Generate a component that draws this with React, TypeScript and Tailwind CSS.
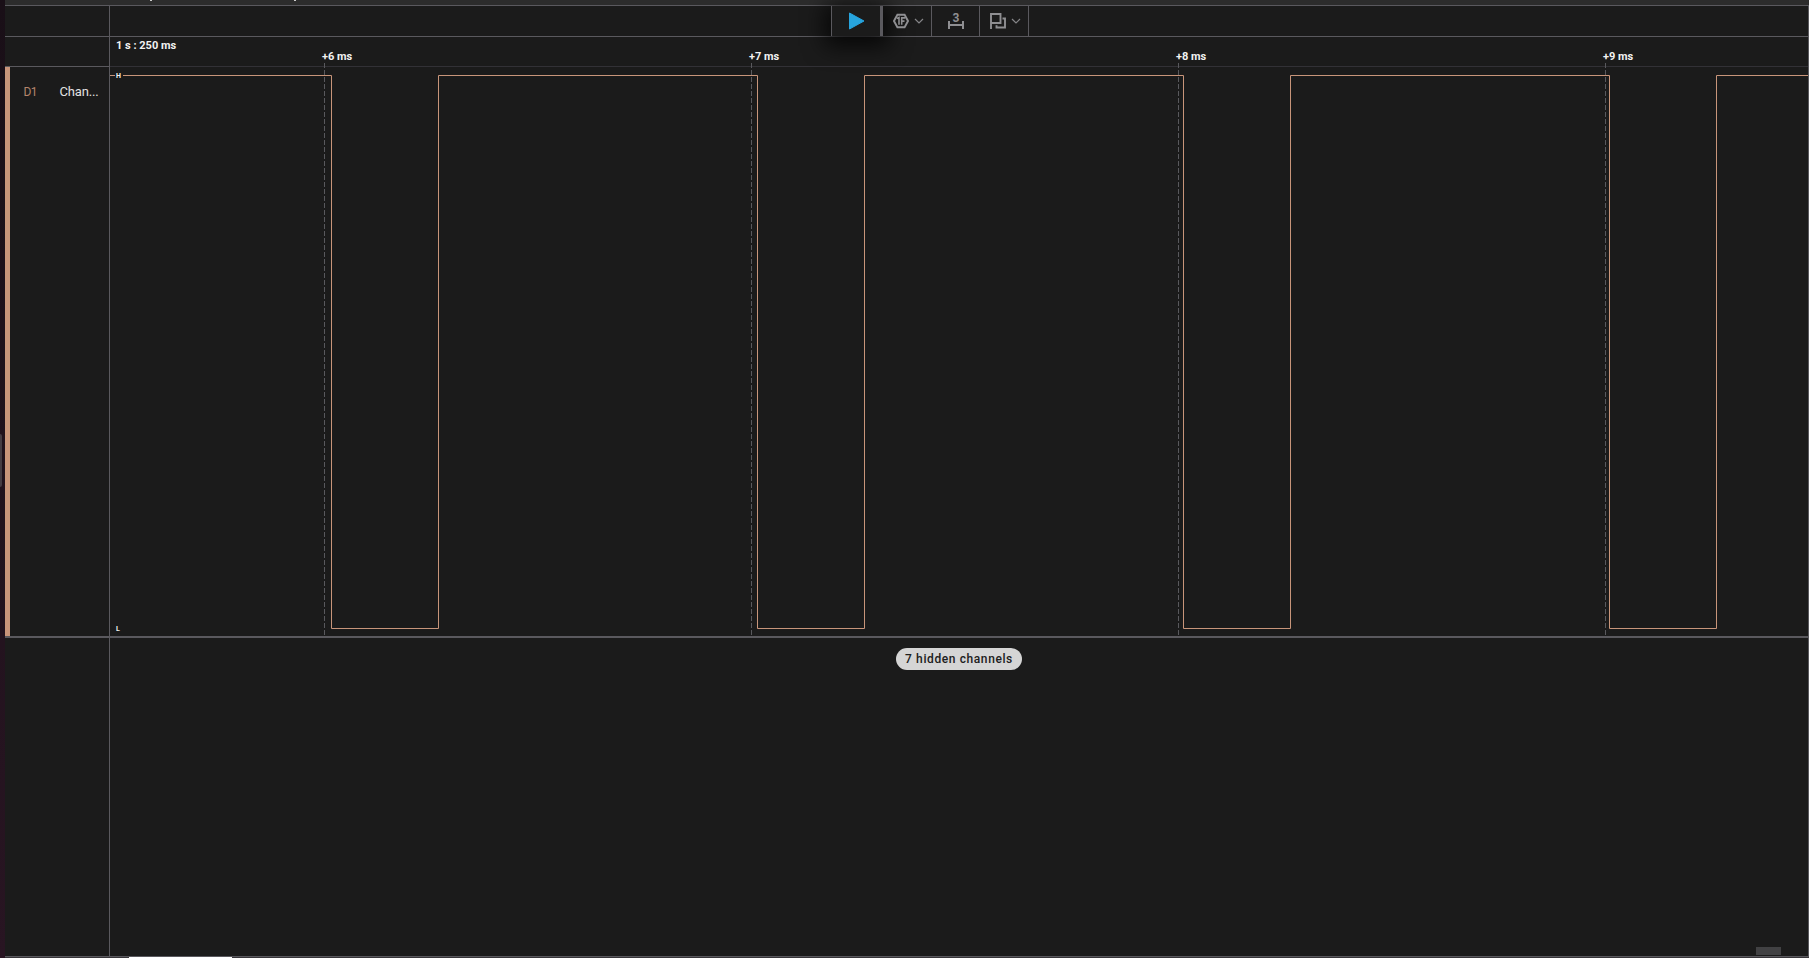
import React from "react";

const MARKS = [
  { x: 324, label: "+6 ms" },
  { x: 751, label: "+7 ms" },
  { x: 1178, label: "+8 ms" },
  { x: 1605, label: "+9 ms" },
];

const PULSES = [
  [221, 328],
  [647, 754],
  [1073, 1180],
  [1499, 1606],
];

function Chevron() {
  return (
    <svg width="10" height="6" viewBox="0 0 10 6" fill="none" stroke="#858588" strokeWidth="1.2">
      <path d="M1 1l4 4 4-4" />
    </svg>
  );
}

function Toolbar() {
  return (
    <div className="flex h-[30px] text-[#8f8f92]">
      <div className="w-[721px] shrink-0" />
      <div className="relative z-10 flex w-[52px] shrink-0 items-center border-l border-r-[3px] border-[#5a595e] bg-[#1b1b1b] pl-[17px] shadow-[0_4px_22px_6px_rgba(0,0,0,0.75)]">
        <svg width="16" height="18" viewBox="0 0 16 18">
          <path d="M0.5 1L15 9L0.5 17Z" fill="#27a4dd" stroke="#27a4dd" strokeLinejoin="round" />
        </svg>
      </div>
      <div className="relative z-20 flex w-[49px] shrink-0 items-center gap-[5px] border-r border-[#5a595e] pl-[10px]">
        <svg width="16" height="16" viewBox="0 0 16 16" fill="none" stroke="currentColor" strokeWidth="1.9">
          <path d="M4.4 1.7h7.2L15 8l-3.4 6.3H4.4L1 8z" />
          <path d="M3.8 5.6L6 4.6v7.2M8.7 11.8V4.9h3.6M8.7 8.1h2.8" strokeWidth="1.6" />
        </svg>
        <Chevron />
      </div>
      <div className="flex w-12 shrink-0 items-center justify-center border-r border-[#5a595e]">
        <svg width="16" height="18" viewBox="0 0 16 18" fill="none" stroke="currentColor" strokeWidth="2">
          <path d="M1 9V17M15 9V17M1 13h14" />
          <text x="8" y="9.5" fill="currentColor" stroke="none" fontFamily="Roboto" fontSize="12" fontWeight="700" textAnchor="middle">3</text>
        </svg>
      </div>
      <div className="flex w-[49px] shrink-0 items-center gap-[5px] border-r border-[#5a595e] pl-[10px]">
        <svg width="16" height="16" viewBox="0 0 16 16" fill="none" stroke="currentColor" strokeWidth="1.9">
          <path d="M1 16V1h9.5v9H1M12.5 5.5H15v9H6.5v-2.3" />
        </svg>
        <Chevron />
      </div>
    </div>
  );
}

function Ruler() {
  return (
    <div className="relative h-[29px] text-[11px] leading-[13px] font-bold text-[#f2f2f2]">
      <span className="absolute top-[2px] left-[6px] whitespace-nowrap">1 s : 250 ms</span>
      {MARKS.map((m) => (
        <span key={m.label} className="absolute top-[13px] whitespace-nowrap" style={{ left: m.x - 110 - 2 }}>
          {m.label}
        </span>
      ))}
    </div>
  );
}

function Waveform() {
  const d = "M0 8.5" + PULSES.map(([a, b]) => `H${a + 0.5}V561.5H${b + 0.5}V8.5`).join("") + "H1698";
  return (
    <svg className="block overflow-visible" width="1698" height="569" viewBox="0 0 1698 569" fill="none">
      {MARKS.map((m) => (
        <path key={m.x} d={`M${m.x - 109.5} -4V569`} stroke="#59595d" strokeDasharray="5 2" />
      ))}
      <path d={d} stroke="#c8957a" />
      <rect x="5" y="5" width="8" height="7" fill="#1b1b1b" />
      <text x="6" y="11" fill="#f2f2f2" fontFamily="Roboto" fontSize="7" fontWeight="700">H</text>
      <text x="6" y="564" fill="#f2f2f2" fontFamily="Roboto" fontSize="7" fontWeight="700">L</text>
    </svg>
  );
}

export default function App() {
  return (
    <div className="flex h-[958px] w-[1809px] overflow-hidden bg-[#1b1b1b] font-['Roboto',sans-serif]">
      <div className="flex w-[5px] shrink-0 items-center bg-gradient-to-b from-[#190f17] to-[#281522]">
        <div className="-mt-[38px] h-[53px] w-[2px] rounded-r bg-[#443c43]" />
      </div>
      <div className="flex w-[1804px] flex-col">
        <div className="relative h-[6px] shrink-0 border-b border-[#5a595e] bg-[#2c2c2c]">
          <div className="absolute top-0 left-[145px] h-px w-[2px] bg-[#cccccc]" />
          <div className="absolute top-0 left-[289px] h-px w-[2px] bg-[#cccccc]" />
        </div>
        <div className="flex h-[950px] shrink-0 border-r border-[#5a595e]">
          <div className="flex w-[105px] shrink-0 flex-col border-r border-[#5a595e]">
            <div className="h-[31px] border-b border-[#5a595e]" />
            <div className="h-[30px] border-b border-[#5a595e]" />
            <div className="flex h-[569px] border-l-[5px] border-[#c8957a] pt-[16px] leading-[18px]">
              <span className="w-[49.5px] shrink-0 pl-[13.5px] text-[12px] tracking-[-0.6px] text-[#b4846c]">D1</span>
              <span className="text-[13px] tracking-[-0.15px] text-[#e2e2e2]">Chan...</span>
            </div>
            <div className="-mr-px h-[2px] bg-[#5a595e]" />
          </div>
          <div className="flex w-[1698px] flex-col">
            <div className="h-[31px] border-b border-[#5a595e]">
              <Toolbar />
            </div>
            <div className="h-[30px] border-b border-[#323136]">
              <Ruler />
            </div>
            <div className="h-[571px] border-b-2 border-[#5a595e]">
              <Waveform />
            </div>
            <div className="flex pt-[10px] pl-[786px]">
              <div className="flex h-[22px] w-[126px] items-center justify-center rounded-full bg-[#d5d5d5] text-[12px] font-medium tracking-[0.6px] whitespace-nowrap text-[#202020]">
                7 hidden channels
              </div>
            </div>
            <div className="mt-auto mb-px ml-[1646px] h-2 w-[25px] bg-[#414143]" />
          </div>
        </div>
        <div className="h-px shrink-0 bg-[#5a595e]" />
        <div className="flex h-px shrink-0 bg-[#38363a]">
          <div className="ml-[124px] w-[103px] bg-white" />
        </div>
      </div>
    </div>
  );
}
